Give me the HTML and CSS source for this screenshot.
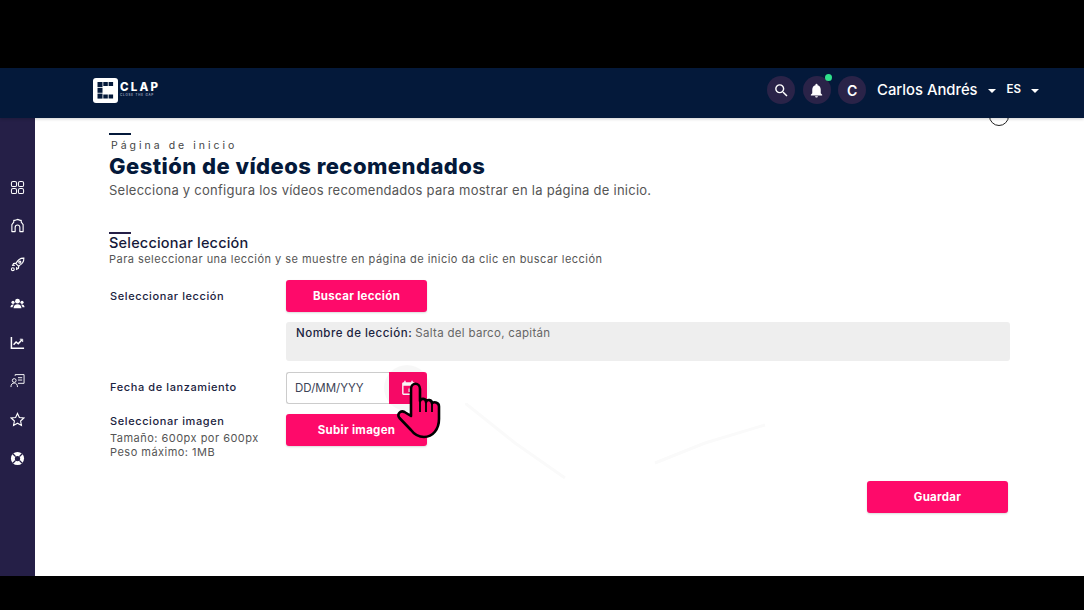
FILE: index.html
```html
<!DOCTYPE html>
<html lang="es">
<head>
<meta charset="utf-8">
<title>Gestión de vídeos recomendados</title>
<link rel="stylesheet" href="styles.css">
</head>
<body>
<div class="band-top"></div>
<header class="topbar">
  <div class="brand">
    <svg class="logo" width="25" height="25" viewBox="0 0 25 25"><rect width="25" height="25" rx="3" fill="#fff"/><g fill="#04193a"><rect x="4.500" y="4" width="5" height="5"/><rect x="10.300" y="4" width="4.500" height="4"/><rect x="15.600" y="4" width="4.500" height="4"/><rect x="4.500" y="9.800" width="5" height="5"/><rect x="4.500" y="15.600" width="5" height="5"/><rect x="10.300" y="16.500" width="4.500" height="4"/><rect x="15.600" y="16.500" width="4.500" height="4"/></g></svg>
    <div class="brand-text"><span class="brand-name">CLAP</span><span class="brand-sub">CLOSE THE GAP</span></div>
  </div>
  <div class="top-actions">
    <span class="round"><svg width="17" height="17" viewBox="0 0 24 24"><path fill="#fff" d="M15.500 14h-.79l-.28-.27A6.470 6.470 0 0 0 16 9.500 6.500 6.500 0 1 0 9.500 16c1.610 0 3.090-.59 4.230-1.570l.27.28v.79l5 4.990L20.490 19l-4.990-5zm-6 0C7.010 14 5 11.990 5 9.500S7.010 5 9.500 5 14 7.010 14 9.500 11.990 14 9.500 14z"/></svg></span>
    <span class="round bell"><svg width="17" height="17" viewBox="0 0 24 24"><path fill="#fff" d="M12 22a2 2 0 0 0 2-2h-4a2 2 0 0 0 2 2zm6-6v-5c0-3.100-1.600-5.600-4.500-6.300V4a1.500 1.500 0 0 0-3 0v.7C7.600 5.400 6 7.900 6 11v5l-2 2v1h16v-1l-2-2z"/></svg><i class="dot"></i></span>
    <span class="round initial">C</span>
    <span class="user">Carlos Andrés</span><i class="caret"></i>
    <span class="lang">ES</span><i class="caret"></i>
  </div>
</header>
<div class="shell">
  <nav class="rail">
    <svg width="15" height="15" viewBox="0 0 16 16" fill="none" stroke="#fff" stroke-width="1.100"><rect x="1.500" y="1.500" width="5.500" height="5.500" rx="1.800"/><rect x="9" y="1.500" width="5.500" height="5.500" rx="1.800"/><rect x="1.500" y="9" width="5.500" height="5.500" rx="1.800"/><rect x="9" y="9" width="5.500" height="5.500" rx="1.800"/></svg>
    <svg width="15" height="15" viewBox="0 0 16 16" fill="none" stroke="#fff" stroke-width="1.200" stroke-linejoin="round"><path d="M2 14.500V7L4 4.500V2.500h1.500L8 1.500l3 1h1v2L14 7v7.500h-3.500V10a2.500 2.500 0 0 0-5 0v4.500z"/></svg>
    <svg width="15" height="15" viewBox="0 0 16 16" fill="none" stroke="#fff" stroke-width="1.200"><path d="M14.800 1.200c-3.800-.2-6.500 1.800-8.500 5.800l2.700 2.700c4-2 6-4.700 5.800-8.500zM6.500 6.500l-2.700.5-1 2 2.500-.2M9.500 9.500l-.5 2.700-2 1 .2-2.500"/><circle cx="10.500" cy="5.500" r="1.100"/><circle cx="3" cy="13" r="1.500"/></svg>
    <svg width="15" height="15" viewBox="0 0 16 16" fill="#fff"><circle cx="8" cy="5.500" r="2.600"/><circle cx="3.200" cy="6.700" r="1.700"/><circle cx="12.800" cy="6.700" r="1.700"/><path d="M3.800 13c0-2.700 1.700-4.300 4.200-4.300s4.200 1.600 4.200 4.300zM.5 12c0-1.800 1-3 2.700-3 .4 0 .6.100.9.200-.8.700-1.300 1.700-1.400 2.800zM15.500 12c0-1.800-1-3-2.700-3-.4 0-.6.100-.9.200.8.700 1.300 1.700 1.400 2.800z"/></svg>
    <svg width="15" height="15" viewBox="0 0 16 16" fill="none" stroke="#fff" stroke-width="1.600"><path d="M1.500 2v12h13.500"/><path d="M3.800 10.500 6.500 7.500l2.300 1.800 4-4.300"/><path d="M10.500 4.500h3v3" stroke-width="1"/></svg>
    <svg width="15" height="15" viewBox="0 0 16 16" fill="none" stroke="#fff" stroke-width="1"><path d="M5.500 3V1.700h9.500V11H8.500"/><circle cx="4.500" cy="8" r="2"/><path d="M1 15c0-3 1.500-4.300 3.500-4.300S8 12 8 15"/><path d="M8.500 5h4.500M8.500 7.500h4.500"/></svg>
    <svg width="15" height="15" viewBox="0 0 16 16" fill="none" stroke="#fff" stroke-width="1.200"><path d="m8 1.500 2 4.300 4.700.6-3.400 3.200.9 4.700L8 12l-4.200 2.300.9-4.700L1.300 6.400 6 5.800z"/></svg>
    <svg width="15" height="15" viewBox="0 0 16 16"><circle cx="8" cy="8" r="7" fill="#fff"/><circle cx="8" cy="8" r="2.800" fill="#251f47"/><path d="m3 3 3 3M13 3l-3 3M3 13l3-3M13 13l-3-3" stroke="#251f47" stroke-width="1.500"/></svg>
  </nav>
  <main class="content">
    <div class="rule rule-page"></div>
    <p class="eyebrow">Página de inicio</p>
    <h1 class="title">Gestión de vídeos recomendados</h1>
    <p class="lead">Selecciona y configura los vídeos recomendados para mostrar en la página de inicio.</p>
    <div class="rule rule-section"></div>
    <h2 class="section-title">Seleccionar lección</h2>
    <p class="section-help">Para seleccionar una lección y se muestre en página de inicio da clic en buscar lección</p>
    <div class="form">
      <span class="label">Seleccionar lección</span>
      <button class="btn">Buscar lección</button>
      <div class="lesson-box"><b>Nombre de lección:</b> <span class="lesson-name">Salta del barco, capitán</span></div>
      <span class="label label-date">Fecha de lanzamiento</span>
      <div class="date">
        <span class="date-value">DD/MM/YYY</span>
        <span class="date-btn"><svg width="17" height="17" viewBox="0 0 24 24"><path fill="#fff" d="M17 12h-5v5h5v-5zM16 1v2H8V1H6v2H5c-1.110 0-1.990.9-1.990 2L3 19c0 1.100.89 2 2 2h14c1.100 0 2-.9 2-2V5c0-1.100-.9-2-2-2h-1V1h-2zm3 18H5V8h14v11z"/></svg></span>
      </div>
      <div class="image-info">
        <span class="label">Seleccionar imagen</span>
        <span class="hint">Tamaño: 600px por 600px</span>
        <span class="hint">Peso máximo: 1MB</span>
      </div>
      <button class="btn btn-upload">Subir imagen</button>
    </div>
    <div class="save-row"><button class="btn">Guardar</button></div>
    <i class="peek"></i>
    <svg class="ghost" width="320" height="90" viewBox="0 0 320 90" fill="none" stroke="#fafafa" stroke-width="3"><path d="M0 0 50 40 100 75M190 60 240 40 300 22"/></svg>
    <span class="halo"></span>
    <svg class="hand" width="46" height="58" viewBox="0 0 46 58"><path fill="#fe0a6a" stroke="#000" stroke-width="2.600" stroke-linejoin="round" d="M15 8c0-7 9-7 9 0v12c1-3 6-3 6 1 1-3 6-2.500 6 1.500 1-2 7-1.500 7 3V38c0 10-6 18-15 18-6 0-10-3-13-7L3.500 37c-3-4 1-8 5-6l6.500 4z"/><path stroke="#000" stroke-width="1.800" d="M24 20v11M30 21v10M36 23v8"/></svg>
  </main>
</div>
<div class="band-bottom"></div>
</body>
</html>
```
FILE: styles.css
```css
* { box-sizing: border-box; }
html, body { margin: 0; height: 610px; overflow: hidden; }
body { display: flex; flex-direction: column; background: #000; font-family: "Inter", "Liberation Sans", sans-serif; color: #04193a; }
p, h1, h2 { margin: 0; }
.band-top { height: 68px; flex: none; }
.band-bottom { height: 34px; flex: none; }
.topbar { height: 50px; flex: none; background: #04193a; display: flex; align-items: center; justify-content: space-between; padding: 0 45px 6px 93px; position: relative; z-index: 2; box-shadow: 0 1px 3px rgba(0,0,0,.2); }
.brand { display: flex; align-items: center; gap: 2px; }
.brand-text { display: flex; flex-direction: column; }
.brand-name { color: #fff; font-weight: 800; font-size: 11.500px; letter-spacing: 2.200px; line-height: 11px; }
.brand-sub { color: #d8dce4; font-size: 3px; letter-spacing: .8px; line-height: 5px; }
.top-actions { display: flex; align-items: center; }
.round { width: 28px; height: 28px; border-radius: 50%; background: #2a2348; display: flex; align-items: center; justify-content: center; margin-right: 7.500px; position: relative; color: #fff; font-weight: 600; font-size: 14px; }
.dot { position: absolute; top: -2px; right: -1px; width: 7px; height: 7px; border-radius: 50%; background: #2fe08a; }
.user { color: #fff; font-size: 14.800px; font-weight: 500; margin-left: 3.500px; }
.caret { width: 0; height: 0; border: 4px solid transparent; border-top-color: #fff; border-bottom: 0; margin-left: 10px; margin-top: 1px; }
.lang { color: #fff; font-size: 11.500px; font-weight: 600; margin-left: 11px; margin-top: -2px; }
.shell { flex: 1; display: flex; min-height: 0; }
.rail { width: 35px; flex: none; background: #251f47; display: flex; flex-direction: column; align-items: center; gap: 23.800px; padding: 61.500px 0 0; }
.rail svg { flex: none; }
.content { flex: 1; background: #fff; padding: 15px 74px 0 74px; position: relative; }
.rule { width: 22px; height: 2px; background: #04193a; }
.rule-section { background: #251f47; margin-top: 32px; }
.eyebrow { font-size: 10.500px; letter-spacing: 3px; color: #444; line-height: 13px; margin: 4px 0 0 2px; }
.title { font-size: 22px; font-weight: 800; line-height: 28px; letter-spacing: .45px; color: #04193a; }
.lead { font-size: 13px; letter-spacing: .25px; color: #555; line-height: 20px; }
.section-title { font-size: 14.500px; font-weight: 500; letter-spacing: .2px; line-height: 17px; color: #16193a; }
.section-help { font-size: 11px; letter-spacing: .47px; color: #555; line-height: 14px; margin-top: 1px; }
.form { display: grid; grid-template-columns: 177px 1fr; align-items: center; margin-top: 14px; }
.label { font-size: 11px; font-weight: 500; letter-spacing: .6px; color: #1b2340; padding-left: 1px; }
.btn { width: 141px; height: 32px; border: 0; border-radius: 3px; background: #fe0a6a; color: #fff; font-family: inherit; font-size: 11.500px; font-weight: 700; letter-spacing: .3px; padding: 0; box-shadow: 0 1px 2px rgba(0,0,0,.15); }
.lesson-box { grid-column: 2; background: #eee; height: 39px; border-radius: 3px; margin-top: 10px; padding: 4px 10px; font-size: 11.500px; line-height: 14px; }
.lesson-box b { color: #1b2340; font-weight: 500; letter-spacing: .5px; }
.lesson-name { color: #666; letter-spacing: .3px; }
.label-date { margin-top: 9px; }
.date { display: flex; width: 141px; height: 32px; margin-top: 11px; }
.date-value { flex: 1; border: 1px solid #ccc; border-right: 0; border-radius: 3px 0 0 3px; font-size: 11.500px; color: #3c4356; display: flex; align-items: center; padding-left: 8px; }
.date-btn { width: 38px; background: #fe0a6a; border-radius: 0 3px 3px 0; display: flex; align-items: center; justify-content: center; }
.image-info { display: flex; flex-direction: column; margin-top: 10px; }
.image-info .label { line-height: 14px; margin-bottom: 3px; }
.hint { font-size: 11px; letter-spacing: .48px; line-height: 14px; color: #555; padding-left: 1px; }
.btn-upload { margin-top: 10px; align-self: start; }
.save-row { display: flex; justify-content: flex-end; margin: 22px 2px 0 0; }
.peek { position: absolute; top: -12px; right: 75px; width: 20px; height: 20px; border: 1.500px solid #222; border-radius: 50%; }
.ghost { position: absolute; left: 430px; top: 285px; }
.halo { position: absolute; left: 349px; top: 247px; width: 46px; height: 46px; border-radius: 50%; background: rgba(0,0,0,.03); }
.hand { position: absolute; left: 361px; top: 263px; }
```
